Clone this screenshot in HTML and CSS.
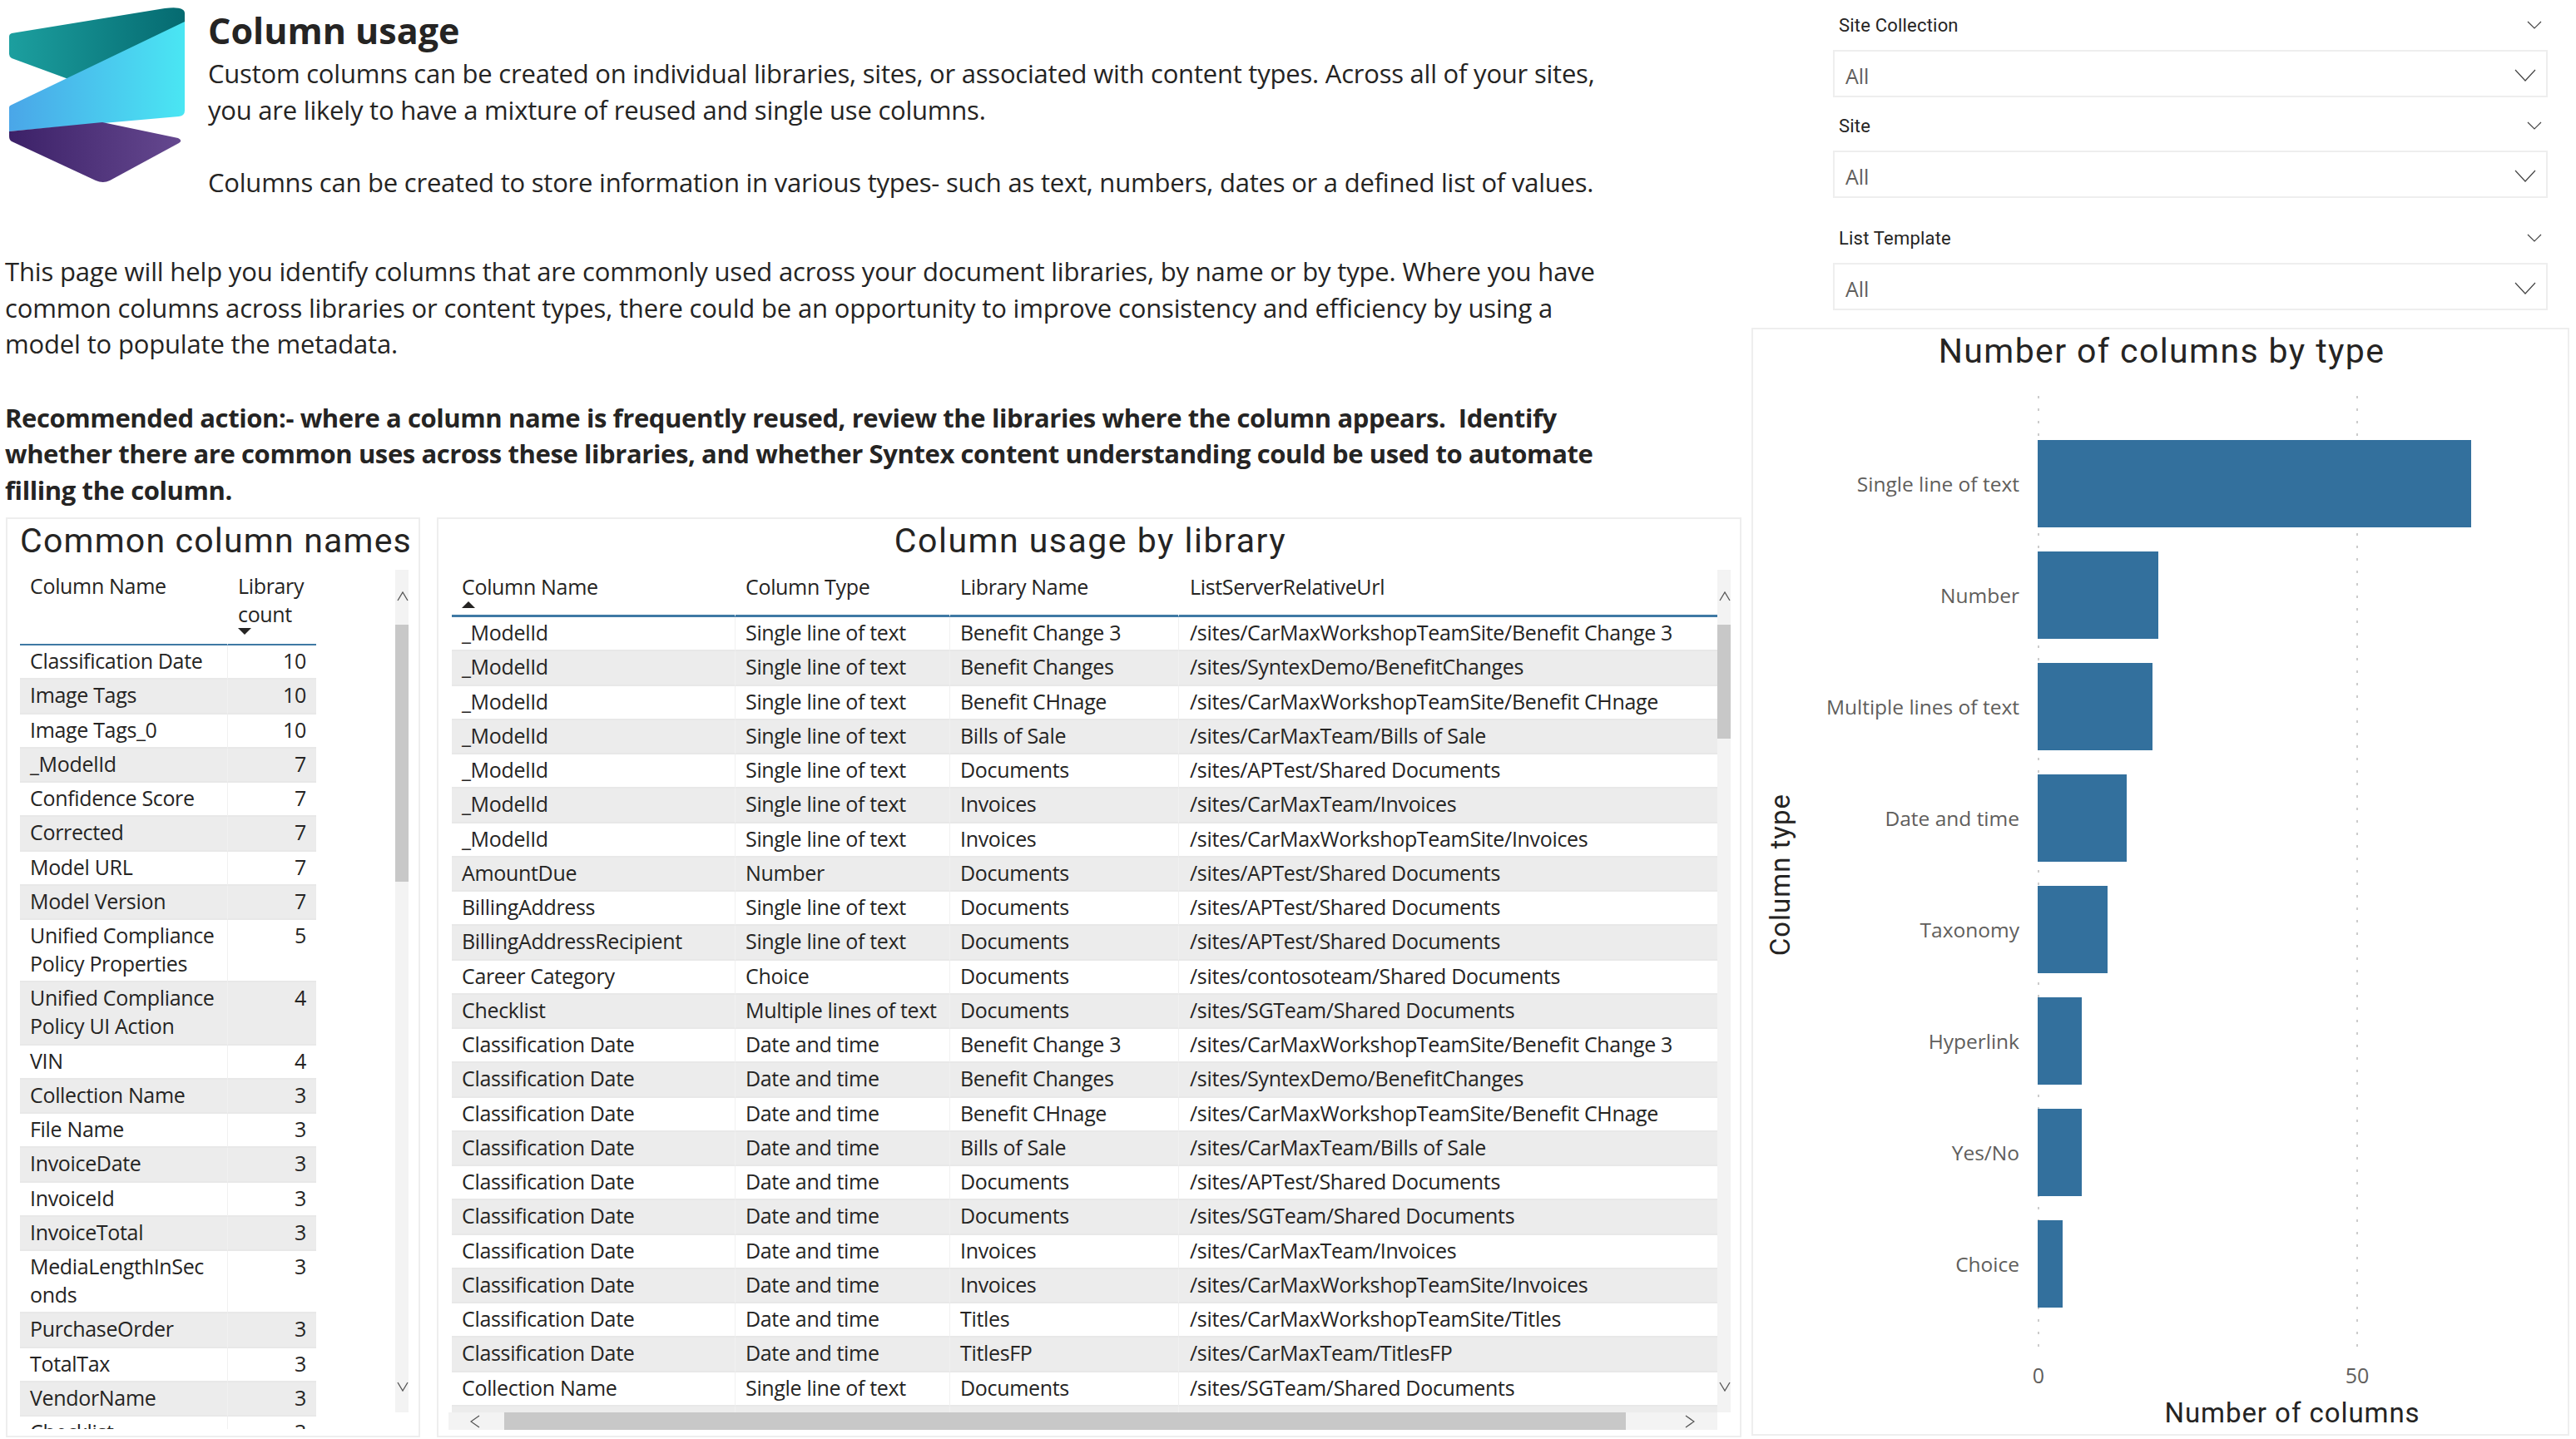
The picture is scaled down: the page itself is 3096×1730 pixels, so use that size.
FILE: index.html
```html
<!DOCTYPE html>
<html lang="en">
<head>
	<meta charset="UTF-8">
	<title>Column usage</title>
	<link rel="stylesheet" href="styles.css">
</head>
<body>

<div id="page">
	<div id="main">
		<div class="intro_head">
			<svg class="logo" viewBox="0 0 232 228" width="232" height="228">
				<defs>
					<linearGradient id="logo_teal" x1="0" y1="0" x2="1" y2="0">
						<stop offset="0" stop-color="#1c9f9f"/>
						<stop offset="1" stop-color="#056a70"/>
					</linearGradient>
					<linearGradient id="logo_blue" x1="0" y1="0" x2="1" y2="0">
						<stop offset="0" stop-color="#4aa6e8"/>
						<stop offset="1" stop-color="#4ae6f3"/>
					</linearGradient>
					<linearGradient id="logo_purple" x1="0" y1="0" x2="1" y2="0">
						<stop offset="0" stop-color="#3c2168"/>
						<stop offset="1" stop-color="#65488f"/>
					</linearGradient>
				</defs>
				<path fill="url(#logo_teal)" d="M14 40 L198 10 Q222 7 222 16 L222 28 L82 95 L14 70 Q11 68 11 65 L11 44 Q11 41 14 40 Z"/>
				<path fill="url(#logo_blue)" d="M222 26 L222 133 Q222 139 215 140 L11 158 L11 129 Q11 127 14 126 Z"/>
				<path fill="url(#logo_purple)" d="M11 158 L123 147 L214 166 Q220 169 215 172 L132 217 Q124 221 115 217 L14 170 Q11 168 11 164 Z"/>
			</svg>
			<div class="intro_text">
				<h1>Column usage</h1>
				<p>Custom columns can be created on individual libraries, sites, or associated with content types. Across all of your sites,<br>you are likely to have a mixture of reused and single use columns.<br><br>Columns can be created to store information in various types- such as text, numbers, dates or a defined list of values.</p>
			</div>
		</div>
		<p class="intro_para">This page will help you identify columns that are commonly used across your document libraries, by name or by type. Where you have<br>common columns across libraries or content types, there could be an opportunity to improve consistency and efficiency by using a<br>model to populate the metadata.</p>
		<p class="intro_action">Recommended action:- where a column name is frequently reused, review the libraries where the column appears.&nbsp; Identify<br>whether there are common uses across these libraries, and whether Syntex content understanding could be used to automate<br>filling the column.</p>

		<div class="tables">
			<div class="panel panel_names">
				<h2>Common column names</h2>
				<div class="scroll_row">
					<div class="table_view view_names">
						<table class="names">
							<thead>
								<tr><th>Column Name</th><th>Library count<span class="sort_down"></span></th></tr>
							</thead>
							<tbody>
								<tr><td>Classification Date</td><td class="num">10</td></tr>
								<tr><td>Image Tags</td><td class="num">10</td></tr>
								<tr><td>Image Tags_0</td><td class="num">10</td></tr>
								<tr><td>_ModelId</td><td class="num">7</td></tr>
								<tr><td>Confidence Score</td><td class="num">7</td></tr>
								<tr><td>Corrected</td><td class="num">7</td></tr>
								<tr><td>Model URL</td><td class="num">7</td></tr>
								<tr><td>Model Version</td><td class="num">7</td></tr>
								<tr><td>Unified Compliance Policy Properties</td><td class="num">5</td></tr>
								<tr><td>Unified Compliance Policy UI Action</td><td class="num">4</td></tr>
								<tr><td>VIN</td><td class="num">4</td></tr>
								<tr><td>Collection Name</td><td class="num">3</td></tr>
								<tr><td>File Name</td><td class="num">3</td></tr>
								<tr><td>InvoiceDate</td><td class="num">3</td></tr>
								<tr><td>InvoiceId</td><td class="num">3</td></tr>
								<tr><td>InvoiceTotal</td><td class="num">3</td></tr>
								<tr><td>MediaLengthInSec<br>onds</td><td class="num">3</td></tr>
								<tr><td>PurchaseOrder</td><td class="num">3</td></tr>
								<tr><td>TotalTax</td><td class="num">3</td></tr>
								<tr><td>VendorName</td><td class="num">3</td></tr>
								<tr><td>Checklist</td><td class="num">3</td></tr>
							</tbody>
						</table>
					</div>
					<div class="vscroll">
						<div class="thumb thumb_names"></div>
						<svg class="arrow arrow_up" viewBox="0 0 14 12" width="14" height="12"><polyline points="1,11 7,1 13,11"/></svg>
						<svg class="arrow arrow_down" viewBox="0 0 14 12" width="14" height="12"><polyline points="1,1 7,11 13,1"/></svg>
					</div>
				</div>
			</div>

			<div class="panel panel_usage">
				<h2>Column usage by library</h2>
				<div class="scroll_row">
					<div class="table_view view_usage">
						<table class="usage">
							<thead>
								<tr><th>Column Name<span class="sort_up"></span></th><th>Column Type</th><th>Library Name</th><th>ListServerRelativeUrl</th></tr>
							</thead>
							<tbody>
								<tr><td>_ModelId</td><td>Single line of text</td><td>Benefit Change 3</td><td>/sites/CarMaxWorkshopTeamSite/Benefit Change 3</td></tr>
								<tr><td>_ModelId</td><td>Single line of text</td><td>Benefit Changes</td><td>/sites/SyntexDemo/BenefitChanges</td></tr>
								<tr><td>_ModelId</td><td>Single line of text</td><td>Benefit CHnage</td><td>/sites/CarMaxWorkshopTeamSite/Benefit CHnage</td></tr>
								<tr><td>_ModelId</td><td>Single line of text</td><td>Bills of Sale</td><td>/sites/CarMaxTeam/Bills of Sale</td></tr>
								<tr><td>_ModelId</td><td>Single line of text</td><td>Documents</td><td>/sites/APTest/Shared Documents</td></tr>
								<tr><td>_ModelId</td><td>Single line of text</td><td>Invoices</td><td>/sites/CarMaxTeam/Invoices</td></tr>
								<tr><td>_ModelId</td><td>Single line of text</td><td>Invoices</td><td>/sites/CarMaxWorkshopTeamSite/Invoices</td></tr>
								<tr><td>AmountDue</td><td>Number</td><td>Documents</td><td>/sites/APTest/Shared Documents</td></tr>
								<tr><td>BillingAddress</td><td>Single line of text</td><td>Documents</td><td>/sites/APTest/Shared Documents</td></tr>
								<tr><td>BillingAddressRecipient</td><td>Single line of text</td><td>Documents</td><td>/sites/APTest/Shared Documents</td></tr>
								<tr><td>Career Category</td><td>Choice</td><td>Documents</td><td>/sites/contosoteam/Shared Documents</td></tr>
								<tr><td>Checklist</td><td>Multiple lines of text</td><td>Documents</td><td>/sites/SGTeam/Shared Documents</td></tr>
								<tr><td>Classification Date</td><td>Date and time</td><td>Benefit Change 3</td><td>/sites/CarMaxWorkshopTeamSite/Benefit Change 3</td></tr>
								<tr><td>Classification Date</td><td>Date and time</td><td>Benefit Changes</td><td>/sites/SyntexDemo/BenefitChanges</td></tr>
								<tr><td>Classification Date</td><td>Date and time</td><td>Benefit CHnage</td><td>/sites/CarMaxWorkshopTeamSite/Benefit CHnage</td></tr>
								<tr><td>Classification Date</td><td>Date and time</td><td>Bills of Sale</td><td>/sites/CarMaxTeam/Bills of Sale</td></tr>
								<tr><td>Classification Date</td><td>Date and time</td><td>Documents</td><td>/sites/APTest/Shared Documents</td></tr>
								<tr><td>Classification Date</td><td>Date and time</td><td>Documents</td><td>/sites/SGTeam/Shared Documents</td></tr>
								<tr><td>Classification Date</td><td>Date and time</td><td>Invoices</td><td>/sites/CarMaxTeam/Invoices</td></tr>
								<tr><td>Classification Date</td><td>Date and time</td><td>Invoices</td><td>/sites/CarMaxWorkshopTeamSite/Invoices</td></tr>
								<tr><td>Classification Date</td><td>Date and time</td><td>Titles</td><td>/sites/CarMaxWorkshopTeamSite/Titles</td></tr>
								<tr><td>Classification Date</td><td>Date and time</td><td>TitlesFP</td><td>/sites/CarMaxTeam/TitlesFP</td></tr>
								<tr><td>Collection Name</td><td>Single line of text</td><td>Documents</td><td>/sites/SGTeam/Shared Documents</td></tr>
								<tr><td>&nbsp;</td><td>&nbsp;</td><td>&nbsp;</td><td>&nbsp;</td></tr>
							</tbody>
						</table>
					</div>
					<div class="vscroll">
						<div class="thumb thumb_usage"></div>
						<svg class="arrow arrow_up" viewBox="0 0 14 12" width="14" height="12"><polyline points="1,11 7,1 13,11"/></svg>
						<svg class="arrow arrow_down" viewBox="0 0 14 12" width="14" height="12"><polyline points="1,1 7,11 13,1"/></svg>
					</div>
				</div>
				<div class="hscroll">
					<svg class="arrow_h" viewBox="0 0 12 16" width="12" height="16"><polyline points="11,1 1,8 11,15"/></svg>
					<div class="thumb_h"></div>
					<svg class="arrow_h" viewBox="0 0 12 16" width="12" height="16"><polyline points="1,1 11,8 1,15"/></svg>
				</div>
			</div>
		</div>
	</div>

	<div id="side">
		<div class="slicer">
			<div class="slicer_label">Site Collection
				<svg viewBox="0 0 18 10" width="18" height="10"><polyline points="1,1 9,9 17,1"/></svg>
			</div>
			<div class="slicer_box">All
				<svg viewBox="0 0 26 15" width="26" height="15"><polyline points="1,1 13,14 25,1"/></svg>
			</div>
		</div>
		<div class="slicer">
			<div class="slicer_label">Site
				<svg viewBox="0 0 18 10" width="18" height="10"><polyline points="1,1 9,9 17,1"/></svg>
			</div>
			<div class="slicer_box">All
				<svg viewBox="0 0 26 15" width="26" height="15"><polyline points="1,1 13,14 25,1"/></svg>
			</div>
		</div>
		<div class="slicer slicer_wide">
			<div class="slicer_label">List Template
				<svg viewBox="0 0 18 10" width="18" height="10"><polyline points="1,1 9,9 17,1"/></svg>
			</div>
			<div class="slicer_box">All
				<svg viewBox="0 0 26 15" width="26" height="15"><polyline points="1,1 13,14 25,1"/></svg>
			</div>
		</div>

		<div class="chart">
			<h2>Number of columns by type</h2>
			<div class="chart_main">
				<div class="y_title"><span>Column type</span></div>
				<div class="plot">
					<div class="grid_line grid_zero"></div>
					<div class="grid_line grid_fifty"></div>
					<div class="bar_row"><span class="bar_label">Single line of text</span><div class="bar" style="width:521px"></div></div>
					<div class="bar_row"><span class="bar_label">Number</span><div class="bar" style="width:145px"></div></div>
					<div class="bar_row"><span class="bar_label">Multiple lines of text</span><div class="bar" style="width:138px"></div></div>
					<div class="bar_row"><span class="bar_label">Date and time</span><div class="bar" style="width:107px"></div></div>
					<div class="bar_row"><span class="bar_label">Taxonomy</span><div class="bar" style="width:84px"></div></div>
					<div class="bar_row"><span class="bar_label">Hyperlink</span><div class="bar" style="width:53px"></div></div>
					<div class="bar_row"><span class="bar_label">Yes/No</span><div class="bar" style="width:53px"></div></div>
					<div class="bar_row"><span class="bar_label">Choice</span><div class="bar" style="width:30px"></div></div>
				</div>
			</div>
			<div class="axis">
				<span>0</span>
				<span>50</span>
			</div>
			<div class="x_title">Number of columns</div>
		</div>
	</div>
</div>

</body>
</html>
```

FILE: styles.css
```css
html, body {
	margin: 0;
	padding: 0;
	background-color: white;
	color: #252423;
	font-family: "Open Sans", "Noto Sans", sans-serif;
}

#page {
	display: grid;
	grid-template-columns: 2098px 998px;
	width: 3096px;
	height: 1730px;
	overflow: hidden;
}

/* intro text */
.intro_head {
	display: flex;
	height: 241px;
}

.logo {
	flex: none;
	width: 232px;
	height: 228px;
	margin-right: 18px;
}

.intro_text {
	padding-top: 15px;
}

h1 {
	margin: 0 0 8px 0;
	font-size: 43px;
	line-height: 44px;
	font-weight: bold;
}

p {
	margin: 0;
	font-size: 31px;
	line-height: 43.5px;
	letter-spacing: -0.22px;
	white-space: nowrap;
}

.intro_para {
	margin: 64px 0 0 6px;
	letter-spacing: -0.16px;
}

.intro_action {
	margin: 45px 0 0 6px;
	font-weight: bold;
	letter-spacing: -0.4px;
}

/* table panels */
.tables {
	display: flex;
	gap: 20px;
	margin: 11px 0 0 7px;
}

.panel {
	box-sizing: border-box;
	height: 1106px;
	border: 2px solid #eeeeee;
}

.panel h2 {
	margin: 0 0 7px 0;
	font-family: Roboto, sans-serif;
	font-size: 41px;
	line-height: 52px;
	padding-bottom: 2px;
	font-weight: normal;
	text-align: center;
	letter-spacing: 1.2px;
}

.panel_names {
	width: 498px;
	padding-right: 12px;
}

.panel_usage {
	width: 1568px;
	padding-right: 11px;
}

.panel_names h2 {
	padding-left: 9px;
	margin-right: -10px;
	white-space: nowrap;
}

.panel_usage h2 {
	padding-left: 14px;
	letter-spacing: 1.5px;
}

.scroll_row {
	display: flex;
	align-items: flex-start;
}

.table_view {
	flex: 1;
	overflow: hidden;
}

.view_names {
	height: 1033px;
	padding-left: 15px;
}

.view_usage {
	height: 1013px;
	padding-left: 16px;
}

table {
	border-collapse: separate;
	border-spacing: 0;
	table-layout: fixed;
	font-size: 25px;
	letter-spacing: -0.33px;
}

table.names {
	width: 356px;
}

table.names th:first-child, table.names td:first-child {
	width: 249px;
}

table.usage {
	width: 1521px;
}

table.usage th:nth-child(1) { width: 340px; }
table.usage th:nth-child(2) { width: 258px; }
table.usage th:nth-child(3) { width: 275px; }

table.usage th:nth-child(4), table.usage td:nth-child(4) {
	padding-left: 13px;
}

th {
	box-sizing: border-box;
	padding: 2px 12px 0 12px;
	font-weight: normal;
	line-height: 34px;
	text-align: left;
	vertical-align: top;
	border-bottom: 2px solid #3f79a4;
}

th + th {
	border-left: 1px solid white;
}

table.names th {
	height: 91px;
}

table.usage th {
	height: 57px;
	padding-top: 3px;
	border-bottom-width: 3px;
}

td {
	padding: 1px 12px 4.25px 12px;
	line-height: 34px;
	vertical-align: top;
	border-bottom: 2px solid #e8e8e8;
	white-space: nowrap;
}

tbody tr:nth-child(even) td {
	background-color: #ececec;
}

td + td {
	border-left: 1px solid #f1f1f1;
}

table.names tbody td:first-child {
	white-space: normal;
	padding-right: 4px;
}

td.num {
	text-align: right;
}

.sort_down, .sort_up {
	display: block;
	width: 0;
	height: 0;
	border-left: 8px solid transparent;
	border-right: 8px solid transparent;
}

.sort_down {
	border-top: 8px solid #252423;
	margin-top: 0;
}

.sort_up {
	border-bottom: 8px solid #252423;
	margin-top: 1px;
}

/* scrollbars */
.vscroll {
	position: relative;
	flex: none;
	width: 16px;
	height: 1013px;
	background-color: #f3f3f3;
}

.thumb {
	width: 16px;
	background-color: #c8c8c8;
}

.thumb_names {
	height: 309px;
	margin-top: 66px;
}

.thumb_usage {
	height: 137px;
	margin-top: 66px;
}

.arrow {
	position: absolute;
	right: 0;
	fill: none;
	stroke: #555555;
	stroke-width: 1.3;
}

.arrow_up {
	top: 26px;
}

.arrow_down {
	bottom: 25px;
}

.hscroll {
	display: flex;
	align-items: center;
	box-sizing: border-box;
	width: 1525px;
	height: 21px;
	margin-left: 12px;
	padding-left: 26px;
	background-color: #f3f3f3;
}

.arrow_h {
	flex: none;
	fill: none;
	stroke: #555555;
	stroke-width: 1.3;
}

.thumb_h {
	flex: none;
	width: 1348px;
	height: 21px;
	margin: 0 71px 0 29px;
	background-color: #c8c8c8;
}

/* slicers */
#side {
	display: flex;
	flex-direction: column;
}

.slicer {
	margin: 19px 34px 0 105px;
}

.slicer:first-child {
	margin-top: 15px;
}

.slicer_wide {
	margin-top: 33px;
}

.slicer_label {
	display: flex;
	align-items: center;
	justify-content: space-between;
	height: 30px;
	margin-bottom: 15px;
	padding: 0 7px;
	font-family: Roboto, sans-serif;
	font-size: 22px;
	letter-spacing: 0.2px;
}

.slicer_label svg, .slicer_box svg {
	fill: none;
	stroke: #444444;
	stroke-width: 1.2;
}

.slicer_box {
	display: flex;
	align-items: center;
	justify-content: space-between;
	box-sizing: border-box;
	height: 57px;
	padding: 4px 12px 0 13px;
	border: 2px solid #eeeeee;
	color: #605e5c;
	font-size: 25px;
}

/* bar chart */
.chart {
	box-sizing: border-box;
	width: 983px;
	height: 1332px;
	margin: 21px 0 0 7px;
	border: 2px solid #eeeeee;
}

.chart h2 {
	margin: 0;
	padding-left: 3px;
	font-family: Roboto, sans-serif;
	font-size: 41px;
	line-height: 52px;
	font-weight: normal;
	text-align: center;
	letter-spacing: 1.4px;
}

.chart_main {
	display: flex;
	height: 1151px;
	margin-top: 28px;
}

.y_title {
	display: flex;
	align-items: center;
	justify-content: center;
	flex: none;
	width: 64px;
}

.y_title span {
	writing-mode: vertical-rl;
	transform: rotate(180deg);
	font-family: Roboto, sans-serif;
	font-size: 33px;
	letter-spacing: 1px;
}

.plot {
	position: relative;
	flex: 1;
	padding: 38px 0 42px 0;
}

.grid_line {
	position: absolute;
	top: 0;
	bottom: 0;
	width: 2px;
	background-image: repeating-linear-gradient(to bottom, #cccccc 0, #cccccc 3px, transparent 3px, transparent 15px);
}

.grid_zero {
	left: 278px;
}

.grid_fifty {
	left: 661px;
}

.bar_row {
	position: relative;
	display: flex;
	align-items: center;
	height: 134px;
}

.bar_label {
	flex: none;
	width: 256px;
	margin-right: 22px;
	color: #605e5c;
	font-size: 24.5px;
	text-align: right;
	white-space: nowrap;
}

.bar {
	height: 105px;
	background-color: #33709d;
}

.axis {
	display: flex;
	gap: 323px;
	margin: 8px 0 0 313px;
	color: #605e5c;
	font-size: 25px;
	line-height: 36px;
}

.axis span {
	width: 60px;
	text-align: center;
}

.x_title {
	width: 610px;
	margin: 8px 0 0 343px;
	font-family: Roboto, sans-serif;
	font-size: 33px;
	line-height: 40px;
	text-align: center;
	letter-spacing: 0.95px;
}
```
